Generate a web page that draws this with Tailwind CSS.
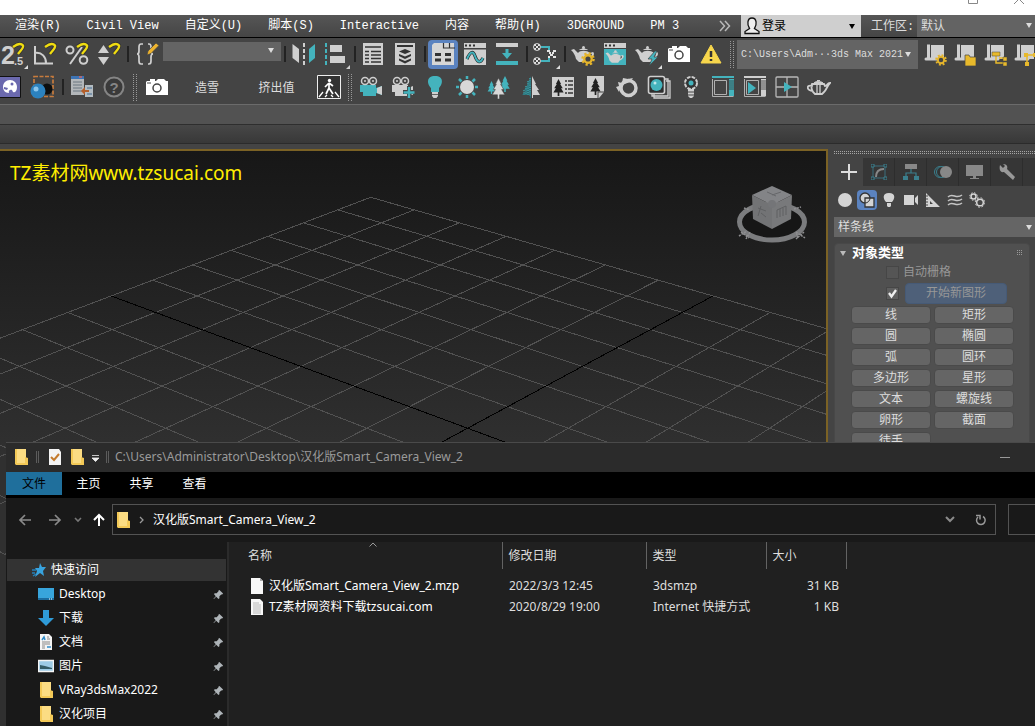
<!DOCTYPE html>
<html lang="zh-CN">
<head>
  <meta charset="UTF-8" />
  <title>3ds Max</title>
  <script src="https://cdn.jsdelivr.net/npm/@tailwindcss/browser@4"></script>
</head>
<body class="relative h-screen flex flex-col overflow-hidden bg-[#444444] text-xs text-[#dddddd] font-['Liberation_Mono','Noto_Sans_CJK_SC',monospace]">

  <!-- shared icon parts -->
  <svg class="hidden">
    <symbol id="hook" viewBox="0 0 24 24" overflow="visible">
      <path d="M12 5C16 2 20 1 22 3.500C23 6 19 9 17 12" fill="none" stroke="#333" stroke-width="4" />
      <path d="M12 5C16 2 20 1 22 3.500C23 6 19 9 17 12" fill="none" stroke="#f0dc10" stroke-width="2.400" />
    </symbol>
    <symbol id="pot" viewBox="0 0 24 24">
      <path d="M0 8l3-1 4 4c2-3 9-3 12 0l3-1c2 1 1 5-4 7l-2 3H8l-3-3c-1-4-2-6-5-9z" fill="#cfcfcf" />
      <path d="M8 8c2-2 7-2 9 0z" fill="#cfcfcf" /><circle cx="12.500" cy="5.500" r="1.500" fill="#cfcfcf" />
      <path d="M19 12c2-1 3 0 0 3z" fill="#444" />
    </symbol>
    <symbol id="gear" viewBox="0 0 12 12">
      <circle cx="6" cy="6" r="4.800" fill="none" stroke="#e5b52c" stroke-width="2" stroke-dasharray="1.900 1.870" />
      <circle cx="6" cy="6" r="3.200" fill="#444" stroke="#e5b52c" stroke-width="2" />
    </symbol>
    <symbol id="cam" viewBox="0 0 24 24">
      <path d="M2 6h3V4h5v2h1l2-2h6l2 2h2v14H1V7z" fill="#fff" />
      <circle cx="12" cy="13" r="4" fill="none" stroke="#444" stroke-width="1.500" /><path d="M2 8h4" stroke="#444" />
    </symbol>
    <symbol id="scroll" viewBox="0 0 24 24">
      <path d="M6 3h14v14H6z" fill="#cfcfcf" /><path d="M2.500 2v14a2 2 0 0 0 4 0V2z" fill="#cfcfcf" stroke="#444" />
      <path d="M2 17h12" stroke="#cfcfcf" stroke-width="3" stroke-linecap="round" />
    </symbol>
    <symbol id="tree" viewBox="0 0 12 20">
      <path d="M6 0l3 6-1 0 3 5-2 0 3 5H7v4H5v-4H0l3-5-2 0 3-5-1 0z" />
    </symbol>
    <symbol id="movie" viewBox="0 0 24 24">
      <g fill="none" stroke="#cfcfcf" stroke-width="1.500"><circle cx="6" cy="6" r="3.500" /><circle cx="14" cy="6" r="3.500" /></g>
      <circle cx="6" cy="6" r="1" fill="#cfcfcf" /><circle cx="14" cy="6" r="1" fill="#cfcfcf" />
    </symbol>
    <symbol id="folder" viewBox="0 0 16 16">
      <path d="M2 0h10v16H2z" fill="#fbdc83" /><path d="M11 8l3 1v7H2l-1-1V0h2v14h8z" fill="#f3c957" />
    </symbol>
    <symbol id="pin" viewBox="0 0 12 12">
      <path d="M7 1l4 4-1 1-1 0-2 2 0 2-1 1-2.500-2.500L1 11l-.5-.5L3 8 1 5.500 2 4.500l2 0 2-2 0-1z" fill="#aeb4b8" />
    </symbol>
  </svg>

  <!-- title bar -->
  <header class="h-[15px] shrink-0 bg-white flex justify-end gap-9 pr-[11px] overflow-hidden">
    <svg class="w-[10px] h-1" viewBox="0 0 10 4"><path d="M.5 0v3.500h9V0" fill="none" stroke="#888" /></svg>
    <svg class="w-[10px] h-1" viewBox="0 0 10 4"><path d="M0 4l5-5 5 5" fill="none" stroke="#888" /></svg>
  </header>

  <!-- menu bar -->
  <nav class="h-[23px] shrink-0 flex items-center bg-linear-to-b from-[#565656] to-[#454545] border-b border-black whitespace-nowrap">
    <div class="flex gap-[26px] pl-[15px] pb-px text-white">
      <a href="#">渲染(R)</a>
      <a href="#">Civil View</a>
      <a href="#">自定义(U)</a>
      <a href="#">脚本(S)</a>
      <a href="#">Interactive</a>
      <a href="#">内容</a>
      <a href="#">帮助(H)</a>
      <a href="#">3DGROUND</a>
      <a href="#">PM 3</a>
    </div>
    <div class="ml-auto flex items-center h-full">
      <button class="w-5 mr-[2px]" aria-label="更多"><svg class="w-3 h-3" viewBox="0 0 12 12"><path d="M1 1l4.500 5L1 11M6 1l4.500 5L6 11" fill="none" stroke="#b8b8b8" stroke-width="1.500" /></svg></button>
      <button class="w-[120px] h-full bg-[#cfcfcf] text-black flex items-center pl-[3px] pr-[6px]">
        <svg class="w-4 h-[18px]" viewBox="0 0 16 18"><path d="M1 16.500v-2l4.500-3C3 8 3 1 8 1s5 7 2.500 10.500l4.500 3v2z" fill="#eee" stroke="#111" stroke-width="1.300" /></svg>
        <span class="ml-[2px] pt-[2px]">登录</span>
        <svg class="w-[6px] h-[5px] ml-auto" viewBox="0 0 6 5"><path d="M0 0h6L3 5z" /></svg>
      </button>
      <label for="workspace" class="pl-[10px] pt-[2px] w-[56px]">工作区:</label>
      <div class="relative w-[118px] h-full">
        <select id="workspace" class="appearance-none w-full h-full bg-[#636363] pl-1 pt-[2px] outline-none"><option>默认</option></select>
        <svg class="absolute right-[3px] top-2 w-[6px] h-[5px]" viewBox="0 0 6 5"><path d="M0 0h6L3 5z" fill="#ddd" /></svg>
      </div>
    </div>
  </nav>

  <!-- toolbar, first row -->
  <div class="h-8 shrink-0 flex items-center -ml-[3px]">
    <button class="w-8 shrink-0 flex justify-center"><svg class="w-6 h-6 overflow-visible" viewBox="0 0 24 24">
      <text x="0" y="22" font-size="25" font-weight="bold" font-family="Liberation Sans" fill="#cfcfcf">2</text>
      <text x="13" y="23" font-size="11" font-weight="bold" font-family="Liberation Sans" fill="#cfcfcf">.5</text>
      <use href="#hook" /><path d="M27 23v4h-4z" fill="#ddd" /></svg></button>
    <button class="w-8 shrink-0 flex justify-center"><svg class="w-6 h-6" viewBox="0 0 24 24">
      <path d="M2 4v17.500h18M2 11c7-1 11 4 11 10" fill="none" stroke="#cfcfcf" stroke-width="2" /><use href="#hook" /></svg></button>
    <button class="w-8 shrink-0 flex justify-center"><svg class="w-6 h-6" viewBox="0 0 24 24">
      <g fill="none" stroke="#cfcfcf" stroke-width="2"><circle cx="5" cy="8" r="3.500" /><circle cx="18.500" cy="18" r="3.800" /><path d="M17 5L5 22" /></g><use href="#hook" /></svg></button>
    <button class="w-8 shrink-0 flex justify-center"><svg class="w-6 h-6" viewBox="0 0 24 24">
      <path d="M6.500 3L12 11H1zM1 15h11l-5.500 8z" fill="#cfcfcf" /><use href="#hook" /></svg></button>
    <span class="w-[6px] shrink-0 h-4 border-r-2 border-[#222] mr-[2px] -ml-[2px]"></span>
    <button class="w-8 shrink-0 flex justify-center"><svg class="w-6 h-6" viewBox="0 0 24 24">
      <path d="M8 2H6q-2 0-2 3v4q0 3-2 3q2 0 2 3v4q0 3 2 3h2M13 2h1q2 0 2 3v4q0 3 2 3q-2 0-2 3v4q0 3-2 3h-1" fill="none" stroke="#cfcfcf" stroke-width="1.700" />
      <path d="M12 13l1-4 8-8 3 2.500-8 8z" fill="#edb32e" stroke="#444" stroke-width=".7" /></svg></button>
    <div class="relative w-[118px] shrink-0 h-[19px] self-start mt-1">
      <select aria-label="命名选择集" class="appearance-none w-full h-full bg-[#646464] outline-none"><option></option></select>
      <svg class="absolute right-[7px] top-[6px] w-[6px] h-[5px]" viewBox="0 0 6 5"><path d="M0 0h6L3 5z" fill="#ddd" /></svg>
    </div>
    <span class="w-[6px] shrink-0 h-4 border-r-2 border-[#222] mr-[1px] -ml-[1px]"></span>
    <button class="w-8 shrink-0 flex justify-center"><svg class="w-6 h-6" viewBox="0 0 24 24">
      <path d="M1.500 2L8 7v14l-6.500-5z" fill="#cfcfcf" /><path d="M24 2l-6 5v14l6-5z" fill="#44b3bd" /><path d="M13 1v22" stroke="#cfcfcf" stroke-width="2" stroke-dasharray="4 2" /></svg></button>
    <button class="w-8 shrink-0 flex justify-center"><svg class="w-6 h-6 overflow-visible" viewBox="0 0 24 24">
      <path d="M3 1v22" stroke="#44b3bd" stroke-width="2" stroke-dasharray="4 2" /><path d="M7 3h12v7H7zM7 14h15v7H7zM27 23v4h-4z" fill="#cfcfcf" /></svg></button>
    <span class="w-[6px] shrink-0 h-4 border-r-2 border-[#222] mr-[1px] -ml-[1px]"></span>
    <button class="w-8 shrink-0 flex justify-center"><svg class="w-6 h-6" viewBox="0 0 24 24">
      <path d="M2 1h20v22H2z" fill="#cfcfcf" /><path d="M4 5h16M4 9.500h4M10 9.500h10M4 13h4M10 13h10M4 16.500h4M10 16.500h10M4 20h4M10 20h10" stroke="#333" stroke-width="1.700" /></svg></button>
    <button class="w-8 shrink-0 flex justify-center"><svg class="w-6 h-6" viewBox="0 0 24 24">
      <path d="M2 1h20v22H2z" fill="#cfcfcf" /><path d="M4 4h16" stroke="#333" stroke-width="2" />
      <path d="M12 7l6 2.500-6 2.500-6-2.500zM6 12l6 2.500 6-2.500v2l-6 3-6-3zM6 16.500l6 2.500 6-2.500v2l-6 3-6-3z" fill="#333" /></svg></button>
    <span class="w-[6px] shrink-0 h-4 border-r-2 border-[#222] mr-[1px] -ml-[1px]"></span>
    <button class="w-[30px] mx-[1px] h-[29px] shrink-0 flex justify-center items-center rounded-sm bg-[#5b83c0]"><svg class="w-6 h-6" viewBox="0 0 24 24">
      <path d="M3 1h20v22H1V3z" fill="#d6d6d6" /><path d="M12.500 1v5H24M18.500 1v5" fill="none" stroke="#333" stroke-width="1.200" />
      <path d="M4 12.500h6M14 12.500h6M4 18h6M14 18h6" stroke="#333" stroke-width="3" /></svg></button>
    <button class="w-8 shrink-0 flex justify-center"><svg class="w-6 h-6" viewBox="0 0 24 24">
      <path d="M1 1h22v5H1zM1 7.500h22V23H1z" fill="#cfcfcf" /><path d="M2 3.500h2M6 3.500h2M10 3.500h2" stroke="#333" stroke-width="2" />
      <path d="M4 17c3-7 6-9 8-3s5 8 8 2" fill="none" stroke="#222" stroke-width="3.200" /><path d="M4 17c3-7 6-9 8-3s5 8 8 2" fill="none" stroke="#44b3bd" stroke-width="2" /></svg></button>
    <button class="w-8 shrink-0 flex justify-center"><svg class="w-6 h-6" viewBox="0 0 24 24">
      <path d="M1 1h22v4H1z" fill="#cfcfcf" /><path d="M1 19h22v4H1zM10.500 7h3v4H17l-5 6-5-6h3.500z" fill="#44b3bd" /></svg></button>
    <span class="w-[6px] shrink-0 h-4 border-r-2 border-[#222] mr-[1px] -ml-[1px]"></span>
    <button class="w-8 shrink-0 flex justify-center"><svg class="w-6 h-6 overflow-visible" viewBox="0 0 24 24">
      <path d="M8 5h8v3M8 19h8v-3" fill="none" stroke="#44b3bd" stroke-width="2" />
      <path d="M1 2h2v2H1zM5 2h2v2H5zM3 4h2v2H3zM1 6h2v2H1zM5 6h2v2H5zM1 16h2v2H1zM5 16h2v2H5zM3 18h2v2H3zM1 20h2v2H1zM5 20h2v2H5zM14 8h3v2h-3zM20 8h3v2h-3zM16 10h2v2h-2zM19 10h2v2h-2zM17 12h3v2h-3zM15 14h2v2h-2zM20 14h3v2h-3z" fill="#e4e4e4" />
      <g fill="none" stroke="#d0d0d0"><circle cx="4" cy="5" r="3.500" /><circle cx="4" cy="19" r="3.500" /></g>
      <path d="M27 23v4h-4z" fill="#ddd" /></svg></button>
    <span class="w-[6px] shrink-0 h-4 border-r-2 border-[#222] mr-[1px] -ml-[1px]"></span>
    <button class="w-8 shrink-0 flex justify-center"><svg class="w-6 h-6" viewBox="0 0 24 24"><use href="#pot" /><use href="#gear" x="10" y="10" width="14" height="14" /></svg></button>
    <button class="w-8 shrink-0 flex justify-center"><svg class="w-6 h-6" viewBox="0 0 24 24">
      <path d="M1 1h22v5H1z" fill="#cfcfcf" /><path d="M1 7h22v16H1z" fill="#44b3bd" /><path d="M2 3.500h2M6 3.500h2M10 3.500h2" stroke="#333" stroke-width="2" /><use href="#pot" x="2" y="5" width="20" height="19" /></svg></button>
    <button class="w-8 shrink-0 flex justify-center"><svg class="w-6 h-6 overflow-visible" viewBox="0 0 24 24"><use href="#pot" />
      <path d="M20 9l-7 8h4l-3 7 9-9h-4l3-6z" fill="#44b3bd" stroke="#444" stroke-width=".7" /><path d="M27 23v4h-4z" fill="#ddd" /></svg></button>
    <button class="w-8 shrink-0 flex justify-center"><svg class="w-6 h-6" viewBox="0 0 24 24"><use href="#cam" /></svg></button>
    <button class="w-8 shrink-0 flex justify-center"><svg class="w-6 h-6" viewBox="0 0 24 24">
      <path d="M12 3l10 18H2z" fill="#f7d64c" stroke="#f7d64c" stroke-linejoin="round" /><path d="M12 9v6M12 17v2" stroke="#333" stroke-width="2.500" /></svg></button>
    <span class="w-1 shrink-0 h-[27px] border-x border-dotted border-[#999] mx-[3px]"></span>
    <div class="relative w-[181px] shrink-0 h-[29px] text-[10px]">
      <select aria-label="项目文件夹" class="appearance-none w-full h-full bg-[#646464] pl-1 pt-[2px] outline-none"><option>C:\Users\Adm···3ds Max 2021</option></select>
      <svg class="absolute right-[7px] top-3 w-[6px] h-[5px]" viewBox="0 0 6 5"><path d="M0 0h6L3 5z" fill="#ddd" /></svg>
    </div>
    <button class="w-[30px] ml-[3px] shrink-0 flex justify-center"><svg class="w-6 h-6" viewBox="0 0 24 24"><use href="#scroll" /><use href="#gear" x="11" y="12" width="12" height="12" /></svg></button>
    <button class="w-[30px] shrink-0 flex justify-center"><svg class="w-6 h-6" viewBox="0 0 24 24"><use href="#scroll" /><path d="M11 13h4l1 2h6v9H11z" fill="#e8b92b" stroke="#444" stroke-width=".7" /></svg></button>
    <button class="w-[30px] shrink-0 flex justify-center"><svg class="w-6 h-6" viewBox="0 0 24 24"><use href="#scroll" /><path d="M12 13v8h7M15 16h4" fill="none" stroke="#e8b92b" stroke-width="1.500" /><path d="M8 10h8v4H8zM19 15h4v4h-4zM19 20h4v4h-4z" fill="#e8b92b" stroke="#444" stroke-width=".5" /></svg></button>
    <button class="w-[30px] shrink-0 flex justify-center"><svg class="w-6 h-6" viewBox="0 0 24 24"><use href="#scroll" /><path d="M13 13v8M13 13h8" fill="none" stroke="#e8b92b" stroke-width="1.500" /><path d="M10 11h4v4h-4zM19 11h4v4h-4zM11 20h4v4h-4z" fill="#e8b92b" /></svg></button>
  </div>

  <!-- toolbar, second row -->
  <div class="h-[34px] shrink-0 flex items-center -ml-[6px]">
    <button class="w-8 shrink-0 flex justify-center"><svg class="w-6 h-6" viewBox="0 0 24 24">
      <path d="M0 1.500h22.500v21H0z" fill="#6b69ae" stroke="#111" /><path d="M12 5c4 0 7 3 7 7s-2 6-4 5l-1-2c-2-1-4 1-3 3-4 0-6-3-6-6 0-4 3-7 7-7z" fill="#fff" /><circle cx="14" cy="9" r="1.500" fill="#6b69ae" /><path d="M6 12l4 1-1 2-3-1z" fill="#6b69ae" /></svg></button>
    <button class="w-8 shrink-0 flex justify-center"><svg class="w-6 h-6" viewBox="0 0 24 24">
      <path d="M4 1.500h19v20H4z" fill="none" stroke="#c77b3d" stroke-width="1.700" stroke-dasharray="4 1.500" /><circle cx="17" cy="14" r="5.500" fill="#0d0f10" />
      <circle cx="8" cy="16" r="7.500" fill="#2c82bf" /><circle cx="6" cy="14" r="2.500" fill="#8cc6ec" /></svg></button>
    <span class="w-[6px] shrink-0 h-4 border-r-2 border-[#222] mr-[2px]"></span>
    <button class="w-8 shrink-0 flex justify-center"><svg class="w-6 h-6" viewBox="0 0 24 24">
      <path d="M1 2h13v18H1z" fill="#b3b7ba" /><path d="M1 1h13v3H1z" fill="#3d74b5" /><path d="M9 2h3" stroke="#c66" stroke-width="1.500" /><path d="M3 7h9M3 10h9M3 13h9M3 16h9" stroke="#6a7680" />
      <path d="M15 10h8v12h-8z" fill="#b3bcc2" /><path d="M17 13h5M17 19h5" stroke="#456b91" /><path d="M19 17h-4v3l-4-4 4-4v3h4z" fill="#b35f2b" /></svg></button>
    <button class="w-8 shrink-0 flex justify-center"><svg class="w-6 h-6" viewBox="0 0 24 24">
      <circle cx="12" cy="12" r="9.500" fill="#3a3a3a" stroke="#858585" stroke-width="2" /><text x="12" y="17.500" font-size="15" font-weight="bold" text-anchor="middle" font-family="Liberation Sans" fill="#858585">?</text></svg></button>
    <span class="w-1 shrink-0 h-[27px] border-x border-dotted border-[#999] mx-[3px]"></span>
    <button class="w-[34px] shrink-0 flex justify-center"><svg class="w-6 h-6" viewBox="0 0 24 24"><use href="#cam" /></svg></button>
    <button class="w-[66px] shrink-0 pt-[3px]">造雪</button>
    <button class="w-[73px] shrink-0 pt-[3px]">挤出值</button>
    <button class="w-8 shrink-0 flex justify-center"><svg class="w-6 h-6" viewBox="0 0 24 24">
      <path d="M.5.5h23v23H.5z" fill="#333" stroke="#eee" /><circle cx="12.500" cy="5.500" r="1.700" fill="#fff" />
      <path d="M12 8v5l-3 6M12 13l4 6M12 8l-4 4M12 8l4 3" fill="none" stroke="#fff" stroke-width="1.700" /><path d="M2 22l4-5M8 22l2-2M22 22l-4-5M16 22l-2-2" stroke="#fff" stroke-width="1.300" /></svg></button>
    <span class="w-1 shrink-0 h-[27px] border-x border-dotted border-[#999] mx-[3px]"></span>
    <button class="w-8 shrink-0 flex justify-center"><svg class="w-6 h-6" viewBox="0 0 24 24"><path d="M1 10h16v3l6-2v9l-6-2v3H4v-4H1z" fill="#44b3bd" /><use href="#movie" /><path d="M18 13l5-2v9l-5-2z" fill="#cfcfcf" /></svg></button>
    <button class="w-8 shrink-0 flex justify-center"><svg class="w-6 h-6" viewBox="0 0 24 24"><path d="M1 10h16v3l5-2v9l-5-2v3H4v-4H1z" fill="#cfcfcf" /><use href="#movie" /><path d="M18 11v12M12 17h12" stroke="#444" stroke-width="4" /><path d="M18 12v11M12.500 17.500h11" stroke="#44b3bd" stroke-width="2.400" /></svg></button>
    <button class="w-8 shrink-0 flex justify-center"><svg class="w-6 h-6" viewBox="0 0 24 24"><path d="M12 1c9 0 8 8 4 12v4H8v-4C4 9 3 1 12 1z" fill="#44b3bd" /><path d="M9 17h6v4l-1.500 2h-3L9 21z" fill="#cfcfcf" /><path d="M9 19.500h6" stroke="#666" /></svg></button>
    <button class="w-8 shrink-0 flex justify-center"><svg class="w-6 h-6" viewBox="0 0 24 24"><circle cx="12" cy="12" r="7" fill="#d8d8d8" /><path d="M12 1v3M12 20v3M1 12h3M20 12h3M4 4l2.500 2.500M17.500 17.500L20 20M20 4l-2.500 2.500M6.500 17.500L4 20" stroke="#44b3bd" stroke-width="2.500" /></svg></button>
    <button class="w-8 shrink-0 flex justify-center"><svg class="w-6 h-6" viewBox="0 0 24 24"><use href="#tree" x="0" y="6" width="9" height="13" fill="#44b3bd" /><use href="#tree" x="13" y="1" width="10" height="16" fill="#44b3bd" /><use href="#tree" x="5" y="3" width="13" height="21" fill="#d8d8d8" stroke="#444" stroke-width=".5" /></svg></button>
    <button class="w-8 shrink-0 flex justify-center"><svg class="w-6 h-6" viewBox="0 0 24 24"><path d="M12 1L8 9h1l-4 6h2l-4 5h8v3h1z" fill="#2a6870" /><path d="M11 3v18M9 6v14M7 11v9M5 15v5" fill="none" stroke="#44b3bd" stroke-width="1.200" stroke-dasharray="1.200 1" /><path d="M13 1l4 8h-1l4 6h-2l3 5h-7v3h-1z" fill="#cfcfcf" /></svg></button>
    <button class="w-8 shrink-0 flex justify-center"><svg class="w-6 h-6" viewBox="0 0 24 24"><path d="M1 2h22v20H1z" fill="#cfcfcf" /><use href="#tree" x="2" y="4" width="11" height="17" fill="#222" /><path d="M14 6h2M17 6h5M14 10h2M17 10h5M14 14h2M17 14h5M14 18h2M17 18h5" stroke="#333" stroke-width="1.500" /></svg></button>
    <button class="w-8 shrink-0 flex justify-center"><svg class="w-6 h-6" viewBox="0 0 24 24"><path d="M4 1h17v16l-5 6H4z" fill="#cfcfcf" /><use href="#tree" x="6" y="3" width="13" height="17" fill="#222" /><path d="M15 23v-6h6" fill="none" stroke="#444" /></svg></button>
    <button class="w-8 shrink-0 flex justify-center"><svg class="w-6 h-6" viewBox="0 0 24 24"><circle cx="13.500" cy="13" r="7.500" fill="none" stroke="#cfcfcf" stroke-width="3.500" /><path d="M1 12l3-1-1-4 4 1 1-5 5 1 5-1-3 4-8 3-3 7z" fill="#cfcfcf" /></svg></button>
    <button class="w-8 shrink-0 flex justify-center"><svg class="w-6 h-6" viewBox="0 0 24 24"><path d="M19 6h4v17H7v-4M17 4h4v17H5v-4" fill="none" stroke="#cfcfcf" stroke-width="1.300" /><rect x="1.500" y="1.500" width="16" height="17" rx="2" fill="#2e2e2e" stroke="#cfcfcf" stroke-width="1.600" /><circle cx="9.500" cy="10" r="6" fill="#44b3bd" /><circle cx="8" cy="8" r="1.500" fill="#bfe8ec" /></svg></button>
    <button class="w-8 shrink-0 flex justify-center"><svg class="w-6 h-6" viewBox="0 0 24 24"><circle cx="12" cy="8" r="6" fill="#333" stroke="#cfcfcf" stroke-width="2" stroke-dasharray="3.500 1.200" /><circle cx="12" cy="8" r="2.500" fill="#44b3bd" /><path d="M9 14h6v7l-2 2h-2l-2-2z" fill="#cfcfcf" /><path d="M9 17h6M9 20h6" stroke="#444" /></svg></button>
    <button class="w-8 shrink-0 flex justify-center"><svg class="w-6 h-6" viewBox="0 0 24 24"><path d="M1 2h22" stroke="#44b3bd" stroke-width="2" /><path d="M3.500 5.500h12v14h-12zM1.500 4v17.500h21" fill="none" stroke="#b0b0b0" /><path d="M20.500 4v17" stroke="#44b3bd" stroke-width="5" /><path d="M18 6h5M18 8h5M18 10h5M18 12h5M18 14h5" stroke="#333" stroke-width=".8" /></svg></button>
    <button class="w-8 shrink-0 flex justify-center"><svg class="w-6 h-6" viewBox="0 0 24 24"><path d="M1 2h22" stroke="#cfcfcf" stroke-width="2" /><path d="M3.500 5.500h12v14h-12zM1.500 4v17.500h21" fill="none" stroke="#b0b0b0" /><path d="M20.500 4v17" stroke="#cfcfcf" stroke-width="5" /><path d="M18 6h5M18 8h5M18 10h5M18 12h5M18 14h5" stroke="#333" stroke-width=".8" /><path d="M5 7l8 6-8 6z" fill="#44b3bd" /></svg></button>
    <button class="w-8 shrink-0 flex justify-center"><svg class="w-6 h-6" viewBox="0 0 24 24"><rect x="1" y="2" width="22" height="20" rx="1" fill="none" stroke="#b8b8b8" stroke-width="1.300" /><path d="M12 2v20M1 12h22" stroke="#b8b8b8" stroke-width="1.300" /><path d="M9 7l8 5-8 5z" fill="#44b3bd" /></svg></button>
    <button class="w-8 shrink-0 flex justify-center"><svg class="w-6 h-6" viewBox="0 0 24 24"><path d="M5 9h12l1 2c2 0 2-3 5-3-3 3-3 6-6 9l-2 2H8l-2-2c-2-3-2-5-1-8zM6 11c-7-2-7 4 0 5" fill="none" stroke="#cfcfcf" stroke-width="1.800" /><path d="M7 8c1-2 7-2 9 0zM10 5.500h3" fill="#cfcfcf" stroke="#cfcfcf" /><path d="M10 9v9M13 9v9" stroke="#cfcfcf" stroke-width="1.300" /></svg></button>
  </div>

  <div class="h-[21px] shrink-0 bg-[#525252] border-t border-[#6b6b6b] border-b border-b-[#2e2e2e]"></div>
  <div class="h-[19px] shrink-0 bg-linear-to-b from-[#474747] to-[#383838] border-b border-[#2b2b2b]"></div>

  <main class="flex-1 min-h-0 flex pt-[5px]">
    <!-- perspective viewport -->
    <section class="relative flex-1 min-w-0 overflow-hidden border-t-2 border-r-2 border-[#7b6225] bg-linear-to-b from-[#171717] to-[#303030] to-[300px]">
      <h1 class="pl-[10px] pt-[8px] text-[19px] leading-7 text-[#ffee00] font-['Noto_Sans','Noto_Sans_CJK_SC',sans-serif]">TZ素材网www.tzsucai.com</h1>
      <svg id="grid" class="absolute left-0 top-0 w-[1035px] h-[576px]" viewBox="0 151 1035 576" fill="none" stroke="#515151" shape-rendering="crispEdges"></svg>
      <svg class="absolute right-[18px] top-[33px] w-[72px] h-[62px]" viewBox="0 0 72 62">
        <ellipse cx="36" cy="38" rx="32" ry="18.500" fill="#161616" stroke="#4a4a4b" stroke-width="2" />
        <ellipse cx="36" cy="38" rx="32.500" ry="18" fill="none" stroke="#7b7c7e" stroke-width="5" />
        <path d="M3 52l8-5M5 48l8 6M10 55l4-7M60 48l9 6M68 48l-8 7M62 54l-2-6M8 24l6 2M58 25l7-2" stroke="#8e8e90" stroke-width="1.500" stroke-dasharray="2 1" />
        <path d="M36 2l20 9-20 10-20-10z" fill="#838487" /><path d="M16 11l20 10v24L17 35z" fill="#727375" /><path d="M56 11L36 21v24l19-10z" fill="#78797b" />
        <path d="M31 8l9 4M36 11l9-3" stroke="#66676a" /><circle cx="36" cy="20" r="4" fill="#747578" />
        <path d="M22 24l8 3M25 22l-3 10M25 29l5 4M41 26v8M41 26l9-4v9M44 25v8M47 24v8" fill="none" stroke="#5f6062" />
      </svg>
    </section>

    <!-- command panel -->
    <aside class="w-[207px] shrink-0 pl-[6px] pt-[2px]">
      <div class="h-[3px] border-y border-dotted border-[#a5a5a5]"></div>
      <div class="mt-[4px] flex h-7 bg-[#363636]">
        <button class="w-[29px] shrink-0 bg-[#444444] flex items-center justify-center"><svg class="w-4 h-4" viewBox="0 0 16 16"><path d="M8 0v16M0 8h16" stroke="#ddd" stroke-width="2" /></svg></button>
        <button class="w-8 shrink-0 border-r border-[#2d2d2d] flex items-center justify-center"><svg class="w-4 h-4" viewBox="0 0 16 16"><path d="M2 2h12v12H2z" fill="none" stroke="#3b6f7d" /><path d="M0 0h3v3H0zM13 0h3v3h-3zM0 13h3v3H0zM13 13h3v3h-3z" fill="#333" stroke="#3b7f8d" /><path d="M5 13c0-5 3-8 8-8" fill="none" stroke="#888" stroke-width="2" /></svg></button>
        <button class="w-8 shrink-0 border-r border-[#2d2d2d] flex items-center justify-center"><svg class="w-4 h-4" viewBox="0 0 16 16"><path d="M2 0h12v5H2z" fill="#888" /><path d="M8 5v4M3 12V9h10v3" fill="none" stroke="#3b7f8d" stroke-width="1.200" /><path d="M0 12h5v4H0zM11 12h5v4h-5z" fill="#3b7f8d" /></svg></button>
        <button class="w-8 shrink-0 border-r border-[#2d2d2d] flex items-center justify-center"><svg class="w-[18px] h-4" viewBox="0 0 18 16"><circle cx="6" cy="8" r="5.500" fill="none" stroke="#3b7f8d" /><circle cx="8" cy="8" r="5.500" fill="#333" stroke="#3b7f8d" /><circle cx="12" cy="8" r="6" fill="#888" /></svg></button>
        <button class="w-8 shrink-0 border-r border-[#2d2d2d] flex items-center justify-center"><svg class="w-[17px] h-4" viewBox="0 0 17 16"><path d="M0 1h17v11H0zM7 12h3v2h3v1H4v-1h3z" fill="#888" /></svg></button>
        <button class="w-8 shrink-0 border-r border-[#2d2d2d] flex items-center justify-center"><svg class="w-4 h-4" viewBox="0 0 16 16"><path d="M1 1l3 3 2-2L4 0c4 0 5 3 4 5l8 8-2 3-9-8C1 9 0 5 1 1z" fill="#999" /></svg></button>
      </div>
      <div class="mt-[4px] h-5 flex items-center pl-px gap-[2px]">
        <button class="w-5 shrink-0 flex justify-center"><svg class="w-4 h-4" viewBox="0 0 16 16"><circle cx="8" cy="8" r="7" fill="#d4d4d4" /></svg></button>
        <button class="w-5 h-5 shrink-0 flex justify-center items-center rounded-sm bg-[#5b83c0]"><svg class="w-4 h-4" viewBox="0 0 16 16"><circle cx="6" cy="6" r="5" fill="#d4d4d4" stroke="#333" stroke-width="1.300" /><path d="M6 6h9v9H6z" fill="#d4d4d4" stroke="#333" stroke-width="1.300" /><path d="M6 11a5 5 0 0 0 5-5" fill="none" stroke="#333" /></svg></button>
        <button class="w-5 shrink-0 flex justify-center"><svg class="w-4 h-4" viewBox="0 0 16 16"><path d="M8 1c7 0 6 6 3 9H5C2 7 1 1 8 1zM6 11h4v3l-1 1H7l-1-1z" fill="#d4d4d4" /></svg></button>
        <button class="w-5 shrink-0 flex justify-center"><svg class="w-4 h-4" viewBox="0 0 16 16"><path d="M1 3h10v10H1zM12 6l3-3v10l-3-3z" fill="#d4d4d4" /></svg></button>
        <button class="w-5 shrink-0 flex justify-center"><svg class="w-4 h-4" viewBox="0 0 16 16"><path d="M1 1l14 14H1zM5 9v3h3z" fill="#d4d4d4" fill-rule="evenodd" /><path d="M1 4h2M1 7h2M1 10h2M1 13h2" stroke="#444" /></svg></button>
        <button class="w-5 shrink-0 flex justify-center"><svg class="w-4 h-4" viewBox="0 0 16 16"><path d="M1 5c5-5 8 3 14-2M1 9c5-5 8 3 14-2M1 13c5-5 8 3 14-2" fill="none" stroke="#c4c4c4" stroke-width="1.500" /></svg></button>
        <button class="w-5 shrink-0 flex justify-center"><svg class="w-4 h-4" viewBox="0 0 16 16"><g fill="none" stroke="#d4d4d4"><circle cx="4.500" cy="4.500" r="2.500" stroke-width="1.500" /><circle cx="4.500" cy="4.500" r="3.800" stroke-dasharray="1.500 1.500" /><circle cx="11" cy="10.500" r="3.300" stroke-width="1.500" /><circle cx="11" cy="10.500" r="4.700" stroke-dasharray="1.900 1.800" /></g></svg></button>
      </div>
      <div class="relative mt-[7px] h-5 mb-[6px]">
        <select aria-label="图形类别" class="appearance-none w-full h-full bg-[#656565] pl-1 pt-px outline-none"><option>样条线</option></select>
        <svg class="absolute right-[3px] top-2 w-[6px] h-[5px]" viewBox="0 0 6 5"><path d="M0 0h6L3 5z" fill="#ddd" /></svg>
      </div>
      <div class="mr-[5px] h-[500px] rounded-sm bg-[#505050] border border-[#484848] text-center">
        <div class="flex items-center h-[18px] pl-[5px] pr-[6px] text-white font-bold">
          <svg class="w-[6px] h-[5px]" viewBox="0 0 6 5"><path d="M0 0h6L3 5z" fill="#bbb" /></svg>
          <h2 class="ml-[6px] pt-px text-[13px]">对象类型</h2>
          <svg class="ml-auto w-[6px] h-[6px]" viewBox="0 0 6 6"><path d="M0 .5h6M0 2.500h6M0 4.500h6" stroke="#999" stroke-dasharray="1 1" /></svg>
        </div>
        <label class="flex items-center h-5 pl-[51px] gap-1 text-[#979797]">
          <input type="checkbox" class="appearance-none w-[13px] h-[13px] border border-[#464646] bg-[#555]" disabled /><span class="pt-[2px]">自动栅格</span>
        </label>
        <div class="flex items-center h-[22px] pl-[51px] gap-[6px]">
          <span class="relative w-[13px] h-[13px] flex">
            <input type="checkbox" aria-label="开始新图形" checked class="appearance-none w-[13px] h-[13px] border border-[#464646] bg-[#5e5e5e]" />
            <svg class="absolute left-0 top-0 w-[13px] h-[13px]" viewBox="0 0 13 13"><path d="M3 6l2.500 3.500L10 3" fill="none" stroke="#eee" stroke-width="2.300" /></svg>
          </span>
          <button class="w-[102px] h-[21px] pt-[2px] rounded-sm bg-[#4e6079] border border-[#465a76] text-[#979797]">开始新图形</button>
        </div>
        <div class="grid grid-cols-[80px_80px] gap-[3px] pl-4 pt-[2px] *:h-[18px] *:rounded-sm *:bg-[#656565] *:border *:border-[#4a4a4a] *:leading-4 *:pt-px">
          <button>线</button><button>矩形</button>
          <button>圆</button><button>椭圆</button>
          <button>弧</button><button>圆环</button>
          <button>多边形</button><button>星形</button>
          <button>文本</button><button>螺旋线</button>
          <button>卵形</button><button>截面</button>
          <button>徒手</button>
        </div>
      </div>
    </aside>
  </main>

  <!-- file explorer window floating over the viewport -->
  <section class="absolute left-[6px] top-[442px] right-0 bottom-0 flex flex-col overflow-hidden bg-[#191919] border-t border-[#4a4a4a] text-white whitespace-nowrap font-['Noto_Sans','Noto_Sans_CJK_SC',sans-serif]">
    <div class="h-[29px] shrink-0 flex items-center bg-[#2b2b2b] pl-[8px] pb-px text-[#9a9a9a]">
      <svg class="w-4 h-4" viewBox="0 0 16 16"><use href="#folder" /></svg>
      <span class="ml-[6px] w-[3px] h-3 border-x border-[#5c5c5c]"></span>
      <svg class="ml-[8px] w-4 h-4" viewBox="0 0 16 16"><path d="M2 0h10l2 3v13H2z" fill="#f4f4f4" /><path d="M4 8l3 3 5-6" fill="none" stroke="#c47a2c" stroke-width="2" /></svg>
      <svg class="ml-[7px] w-4 h-4" viewBox="0 0 16 16"><use href="#folder" /></svg>
      <svg class="ml-[6px] mt-[2px] w-[7px] h-[7px]" viewBox="0 0 7 7"><path d="M0 .5h7M0 3h7L3.500 6.500z" fill="#eee" stroke="#eee" stroke-width=".8" /></svg>
      <span class="ml-[7px] w-[3px] h-3 border-x border-[#5c5c5c]"></span>
      <span class="ml-[6px]">C:\Users\Administrator\Desktop\汉化版Smart_Camera_View_2</span>
      <button class="ml-auto mr-[25px]" aria-label="最小化"><svg class="w-[10px] h-1" viewBox="0 0 10 4"><path d="M0 2.500h10" stroke="#999" /></svg></button>
    </div>
    <nav class="h-[26px] shrink-0 flex bg-black">
      <a href="#" class="w-14 h-[23px] leading-[23px] text-center bg-[#1f6f9c] text-black">文件</a>
      <a href="#" class="w-[53px] text-center leading-6">主页</a>
      <a href="#" class="w-[53px] text-center leading-6">共享</a>
      <a href="#" class="w-[53px] text-center leading-6">查看</a>
    </nav>
    <div class="h-11 shrink-0 flex items-center pl-3">
      <button class="w-[14px]" aria-label="后退"><svg class="w-[14px] h-3" viewBox="0 0 14 12"><path d="M13 6H2M7 1L2 6l5 5" fill="none" stroke="#8a8a8a" stroke-width="1.700" /></svg></button>
      <button class="w-[14px] ml-4" aria-label="前进"><svg class="w-[14px] h-3" viewBox="0 0 14 12"><path d="M1 6h11M7 1l5 5-5 5" fill="none" stroke="#8a8a8a" stroke-width="1.700" /></svg></button>
      <button class="ml-3" aria-label="历史"><svg class="w-[8px] h-[6px]" viewBox="0 0 8 6"><path d="M1 1l3 3 3-3" fill="none" stroke="#777" stroke-width="1.600" /></svg></button>
      <button class="ml-[11px]" aria-label="上移"><svg class="w-3 h-[14px]" viewBox="0 0 12 14"><path d="M6 13V2M1 7l5-5 5 5" fill="none" stroke="#fff" stroke-width="2" /></svg></button>
      <div class="ml-[7px] -mt-[1px] h-[31px] flex-1 flex items-center border border-[#535353] pl-[3px]">
        <svg class="w-4 h-4" viewBox="0 0 16 16"><use href="#folder" /></svg>
        <svg class="ml-[7px] w-[5px] h-2" viewBox="0 0 5 8"><path d="M1 1l3 3-3 3" fill="none" stroke="#999" stroke-width="1.300" /></svg>
        <span class="ml-[9px]">汉化版Smart_Camera_View_2</span>
        <button class="ml-auto" aria-label="展开"><svg class="w-[10px] h-[7px]" viewBox="0 0 10 7"><path d="M1 1l4 4 4-4" fill="none" stroke="#8a8a8a" stroke-width="2" /></svg></button>
        <button class="ml-5 mr-[8px]" aria-label="刷新"><svg class="w-3 h-3" viewBox="0 0 12 12"><path d="M8 2.500A4.300 4.300 0 1 1 3 3M1 1.500h4v4" fill="none" stroke="#999" stroke-width="1.500" /></svg></button>
      </div>
      <input type="text" aria-label="搜索" class="ml-3 -mt-[1px] w-[27px] h-[31px] border border-r-0 border-[#535353] bg-[#191919] outline-none" />
    </div>
    <div class="flex-1 min-h-0 flex">
      <nav class="w-[223px] shrink-0 border-r-2 border-[#2b2b2b] pt-[17px] px-px">
        <a href="#" class="flex items-center h-[22px] mb-px pl-[25px] bg-[#333333]">
          <svg class="w-[14px] h-[14px]" viewBox="0 0 14 14"><path d="M8 0l2 4 4 0-3 4 1 5-4-3-5 4 2-6-2-3 4 0z" fill="#38a3de" /><path d="M0 7h4M0 10h3M1 13l3-2" stroke="#2480bb" stroke-width="1.300" /></svg>
          <span class="ml-[5px]">快速访问</span>
        </a>
        <a href="#" class="flex items-center h-6 pl-[31px]"><svg class="w-4 h-4" viewBox="0 0 16 16"><path d="M0 2h16v12H0z" fill="#38a5dc" /><path d="M0 12h16v2H0z" fill="#1b6c9f" /><path d="M11 13h1M13 13h1" stroke="#fff" /></svg><span class="ml-[5px]">Desktop</span><svg class="ml-auto mr-[2px] w-[11px] h-[11px]" viewBox="0 0 12 12"><use href="#pin" /></svg></a>
        <a href="#" class="flex items-center h-6 pl-[31px]"><svg class="w-4 h-4" viewBox="0 0 16 16"><path d="M5 0h6v8h5l-8 8-8-8h5z" fill="#2f9bd8" /></svg><span class="ml-[5px]">下载</span><svg class="ml-auto mr-[2px] w-[11px] h-[11px]" viewBox="0 0 12 12"><use href="#pin" /></svg></a>
        <a href="#" class="flex items-center h-6 pl-[31px]"><svg class="w-4 h-4" viewBox="0 0 16 16"><path d="M2 0h9l3 3v13H2z" fill="#f4f4f4" /><path d="M4 8h8M4 10h8M4 12h3M4 14h3M9 3h2M9 5h3" stroke="#888" /><path d="M4 6l2-3 1 3M9 13h4" stroke="#2f8bc8" stroke-width="1.500" fill="none" /></svg><span class="ml-[5px]">文档</span><svg class="ml-auto mr-[2px] w-[11px] h-[11px]" viewBox="0 0 12 12"><use href="#pin" /></svg></a>
        <a href="#" class="flex items-center h-6 pl-[31px]"><svg class="w-4 h-4" viewBox="0 0 16 16"><path d="M.5 2.500h15v11H.5z" fill="#9dcbe6" stroke="#f4f4f4" stroke-width="1.500" /><path d="M2 7l5 1 7 2v1H2z" fill="#355c66" /></svg><span class="ml-[5px]">图片</span><svg class="ml-auto mr-[2px] w-[11px] h-[11px]" viewBox="0 0 12 12"><use href="#pin" /></svg></a>
        <a href="#" class="flex items-center h-6 pl-[31px]"><svg class="w-4 h-4" viewBox="0 0 16 16"><use href="#folder" x="1" /></svg><span class="ml-[5px]">VRay3dsMax2022</span><svg class="ml-auto mr-[2px] w-[11px] h-[11px]" viewBox="0 0 12 12"><use href="#pin" /></svg></a>
        <a href="#" class="flex items-center h-6 pl-[31px]"><svg class="w-4 h-4" viewBox="0 0 16 16"><use href="#folder" x="1" /></svg><span class="ml-[5px]">汉化项目</span><svg class="ml-auto mr-[2px] w-[11px] h-[11px]" viewBox="0 0 12 12"><use href="#pin" /></svg></a>
      </nav>
      <div class="relative flex-1 bg-[#202020]">
        <svg class="absolute left-[140px] top-0 w-2 h-[5px]" viewBox="0 0 8 5"><path d="M.5 4.500L4 1l3.500 3.500" fill="none" stroke="#999" /></svg>
        <table class="table-fixed w-[617px] text-[#dedede]">
          <colgroup><col class="w-[273px]" /><col class="w-[144px]" /><col class="w-[120px]" /><col class="w-[80px]" /></colgroup>
          <thead>
            <tr class="h-[27px] text-left *:font-normal *:border-r *:border-[#636363] *:p-0">
              <th><span class="pl-[19px]">名称</span></th><th><span class="pl-[6px]">修改日期</span></th><th><span class="pl-[6px]">类型</span></th><th><span class="pl-[6px]">大小</span></th>
            </tr>
          </thead>
          <tbody>
            <tr class="h-[6px]"></tr>
            <tr class="h-[21px] *:p-0">
              <td class="text-white"><div class="flex items-center pl-5"><svg class="w-4 h-4 mr-1" viewBox="0 0 16 16"><path d="M2 0h9l3 3v13H2z" fill="#f7f7f7" /><path d="M11 0v3h3z" fill="#aaa" /></svg>汉化版Smart_Camera_View_2.mzp</div></td>
              <td><span class="pl-[7px]">2022/3/3 12:45</span></td><td><span class="pl-[7px]">3dsmzp</span></td><td class="text-right"><span class="pr-[7px]">31 KB</span></td>
            </tr>
            <tr class="h-[21px] *:p-0">
              <td class="text-white"><div class="flex items-center pl-5"><svg class="w-4 h-4 mr-1" viewBox="0 0 16 16"><path d="M2 0h9l3 3v13H2z" fill="#f7f7f7" /><path d="M4 4h6M4 6h8M4 8h8M4 10h8M4 12h8M4 14h8" stroke="#aaa" stroke-width=".8" /></svg>TZ素材网资料下载tzsucai.com</div></td>
              <td><span class="pl-[7px]">2020/8/29 19:00</span></td><td><span class="pl-[7px]">Internet 快捷方式</span></td><td class="text-right"><span class="pr-[7px]">1 KB</span></td>
            </tr>
          </tbody>
        </table>
      </div>
    </div>
  </section>

  <script>
    // project a ground-plane cell corner to the screen
    function project(i, j) {
      const w = 1 - 0.01817 * (i + j);
      return [(370.7 - 39.1 * i + 35.95 * j) / w, 150 + (47.3 + 11.44 * (i + j)) / w];
    }
    function addLine(a, b, axis) {
      const line = document.createElementNS('http://www.w3.org/2000/svg', 'line');
      line.setAttribute('x1', a[0]);
      line.setAttribute('y1', a[1]);
      line.setAttribute('x2', b[0]);
      line.setAttribute('y2', b[1]);
      if (axis) line.setAttribute('stroke', '#000');
      document.getElementById('grid').appendChild(line);
    }
    const order = [0, 1, 2, 3, 4, 5, 6, 8, 9, 10, 11, 12, 13, 14, 7];
    order.forEach(n => {
      addLine(project(n, 0), project(n, 14), n === 7);
      addLine(project(0, n), project(14, n), n === 7);
    });
  </script>
</body>
</html>
